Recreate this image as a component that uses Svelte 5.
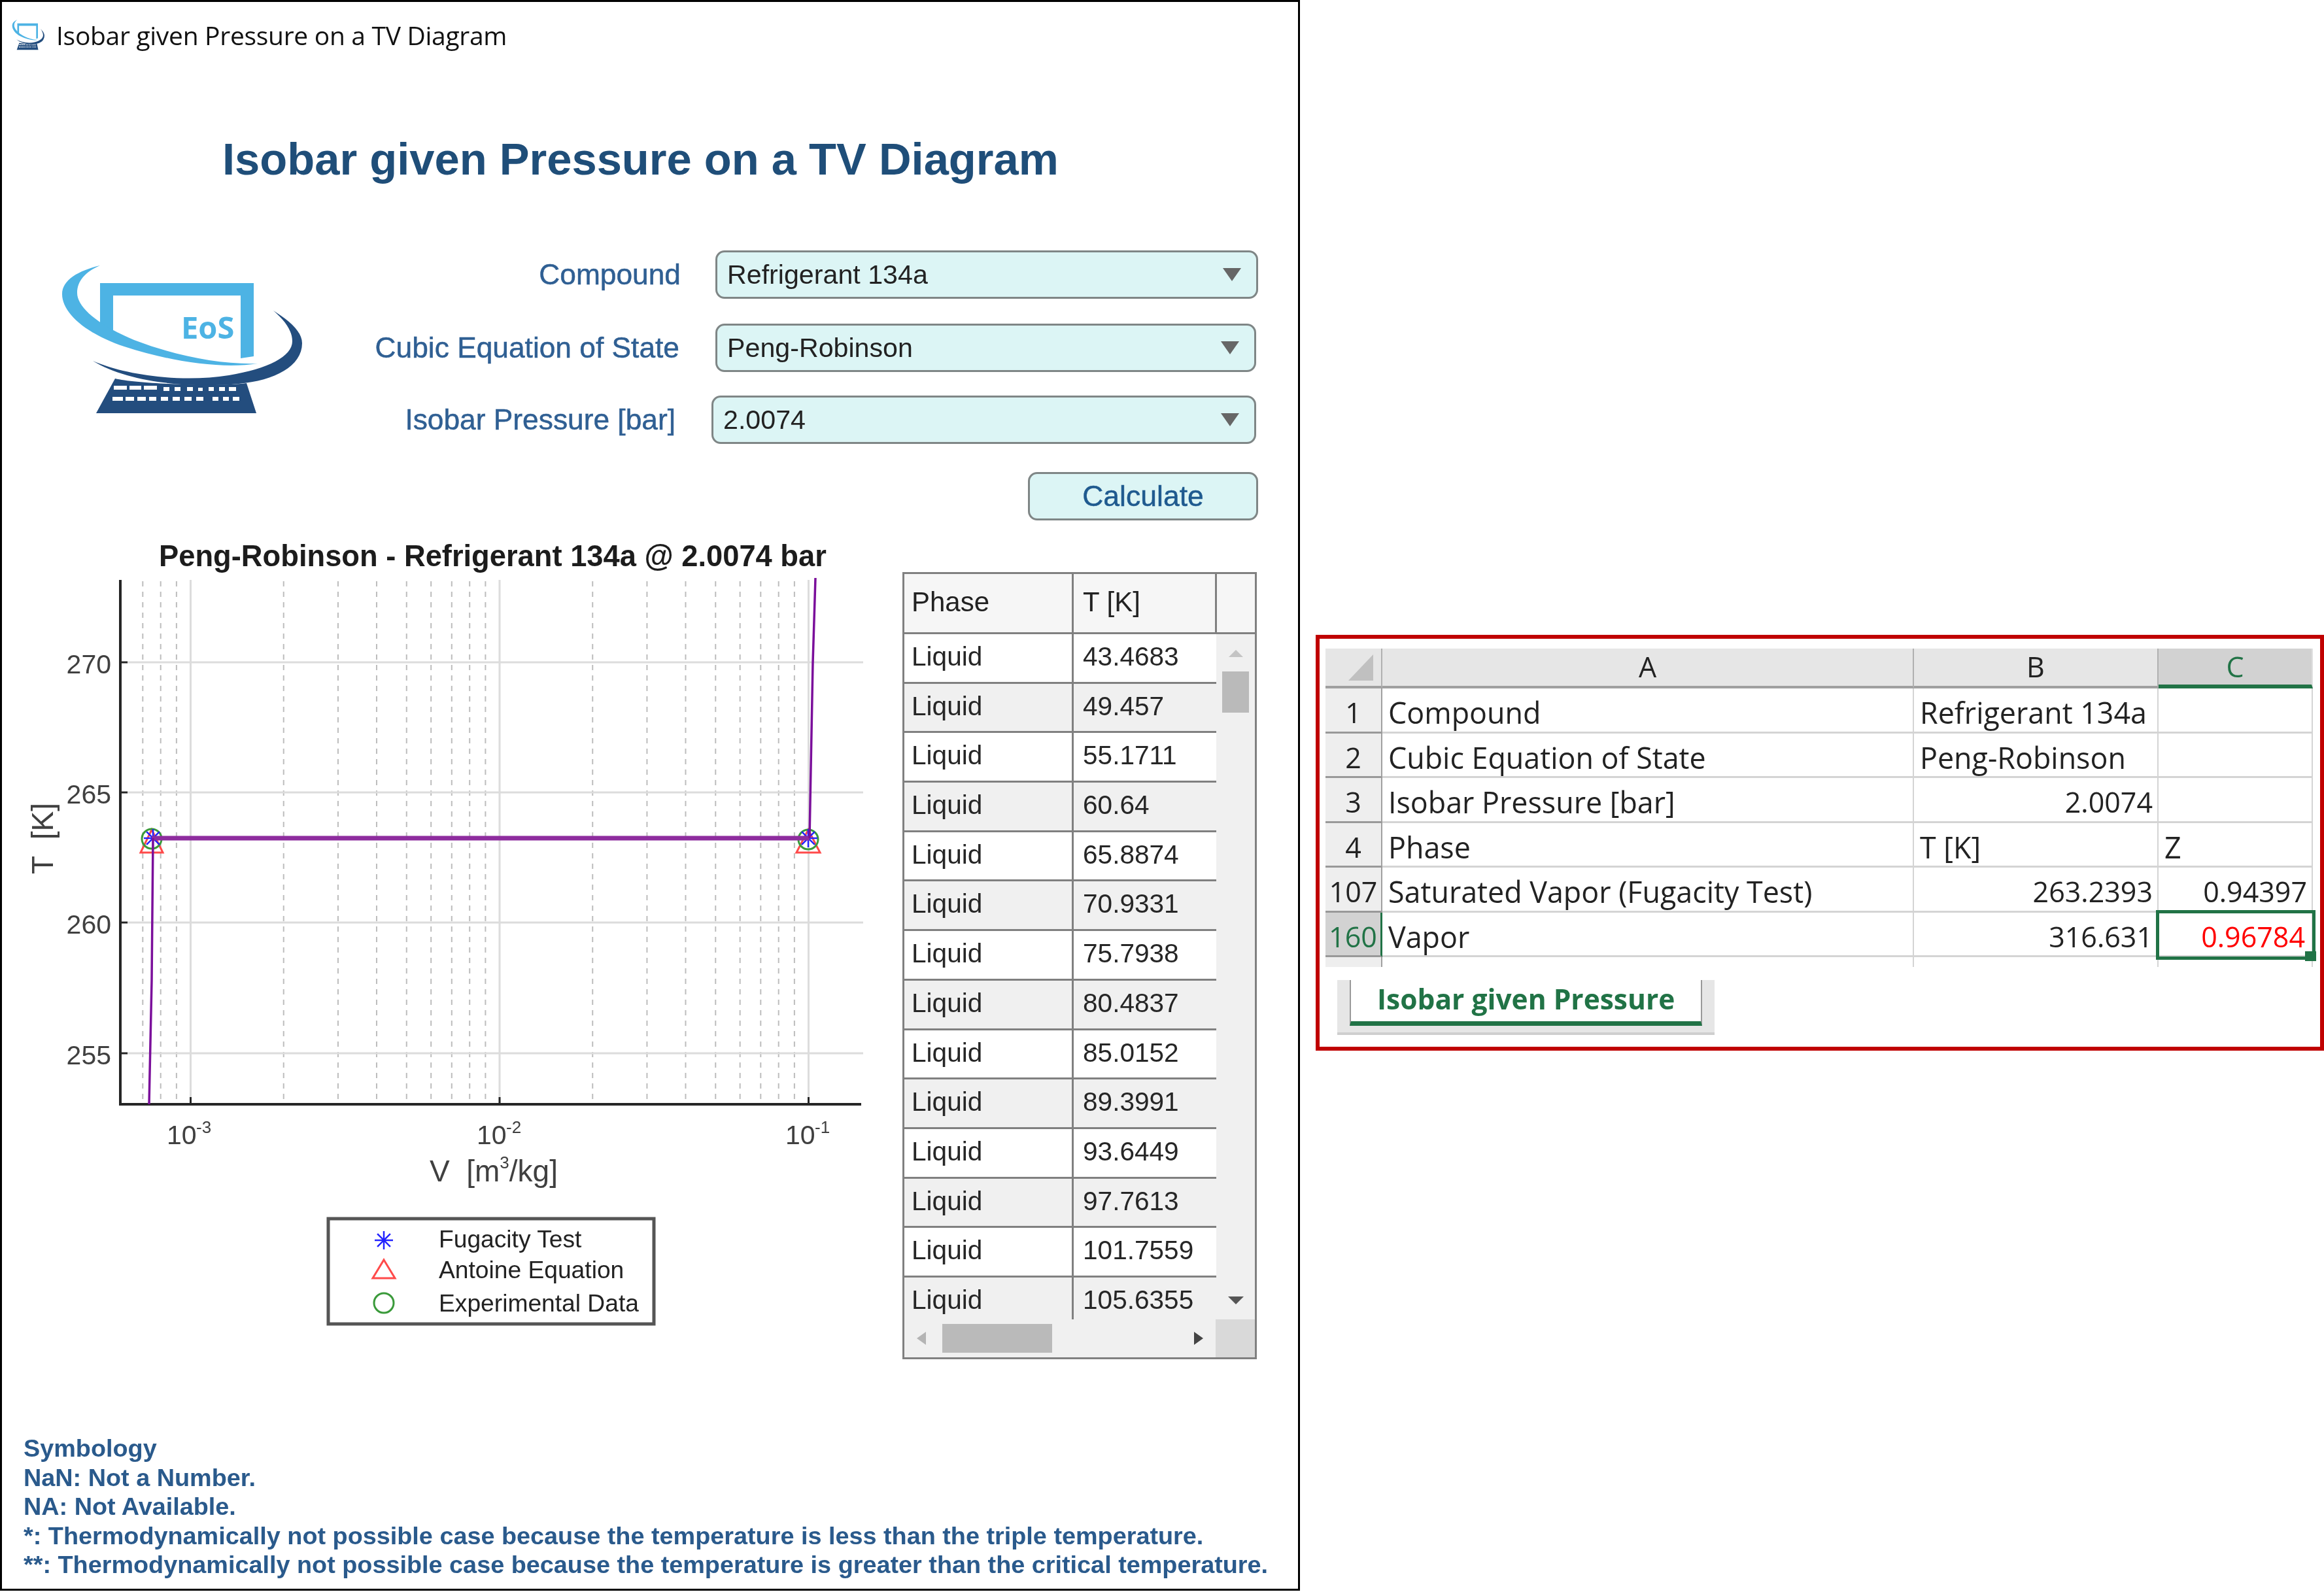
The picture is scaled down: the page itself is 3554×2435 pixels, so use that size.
<script>
  const temps = ['43.4683','49.457','55.1711','60.64','65.8874','70.9331','75.7938','80.4837','85.0152','89.3991','93.6449','97.7613','101.7559','105.6355'];
  const X0 = 291.5, DEC = 472.5;
  const minors = [];
  for (let d = -1; d <= 1; d++) {
    for (let k = 2; k <= 9; k++) {
      const x = X0 + (d + Math.log10(k)) * DEC;
      if (x > 195 && x < 1236) minors.push(x);
    }
  }
  const majorsX = [X0, X0 + DEC, X0 + 2 * DEC];
  const majorsY = [{ y: 1013, t: '270' }, { y: 1212, t: '265' }, { y: 1411, t: '260' }, { y: 1611, t: '255' }];
  const xTicks = [{ x: 255, e: '-3', m: X0 }, { x: 729, e: '-2', m: X0 + DEC }, { x: 1201, e: '-1', m: X0 + 2 * DEC }];
  const star = (cx, cy, r) => {
    const out = [];
    for (let i = 0; i < 4; i++) {
      const a = (i * Math.PI) / 4 + Math.PI / 2;
      out.push({ x1: cx + r * Math.cos(a), y1: cy + r * Math.sin(a), x2: cx - r * Math.cos(a), y2: cy - r * Math.sin(a) });
    }
    return out;
  };
  const excel = [
    { n: '1', a: 'Compound', b: 'Refrigerant 134a', c: '' },
    { n: '2', a: 'Cubic Equation of State', b: 'Peng-Robinson', c: '' },
    { n: '3', a: 'Isobar Pressure [bar]', b: '2.0074', bn: true, c: '' },
    { n: '4', a: 'Phase', b: 'T [K]', c: 'Z', cl: true },
    { n: '107', a: 'Saturated Vapor (Fugacity Test)', b: '263.2393', bn: true, c: '0.94397' },
    { n: '160', a: 'Vapor', b: '316.631', bn: true, c: '0.96784', sel: true }
  ];
</script>

{#snippet logo(cls)}
  <svg class={cls} viewBox="90 400 380 240" preserveAspectRatio="none">
    <path fill="#4db3e4" d="M153 433H388V545L368 548V452H173V512L153 498Z" />
    <path fill="#4db3e4" d="M153 406C120 414 95 428 95 450C95 478 130 510 190 530C260 553 340 565 394 556C340 558 270 545 205 520C150 497 118 470 118 448C118 430 130 416 153 406Z" />
    <path fill="#234d7e" d="M418 475C438 488 462 505 462 525C462 560 420 582 365 587C290 594 195 585 142 552C195 575 280 585 350 574C410 564 447 545 447 522C447 505 435 490 418 475Z" />
    <path fill="#234d7e" d="M176 579C210 587 330 592 377 586L392 632H147Z" />
    <g fill="#fff">
      <rect x="174" y="590" width="20" height="6" /><rect x="198" y="590" width="18" height="6" /><rect x="220" y="590" width="20" height="6" />
      <rect x="250" y="592" width="9" height="6" /><rect x="267" y="592" width="9" height="6" /><rect x="286" y="592" width="9" height="6" /><rect x="303" y="593" width="7" height="5" /><rect x="319" y="592" width="8" height="6" /><rect x="335" y="592" width="9" height="6" /><rect x="350" y="592" width="11" height="6" />
      <rect x="172" y="607" width="16" height="6" /><rect x="192" y="607" width="13" height="6" /><rect x="210" y="607" width="13" height="6" /><rect x="228" y="607" width="11" height="6" /><rect x="246" y="607" width="11" height="6" /><rect x="264" y="607" width="11" height="6" /><rect x="282" y="607" width="11" height="6" /><rect x="300" y="607" width="11" height="6" /><rect x="325" y="607" width="9" height="6" /><rect x="341" y="607" width="9" height="6" /><rect x="356" y="607" width="10" height="6" />
    </g>
    {#if cls === 'logo'}
      <text class="eos" x="277" y="518">EoS</text>
    {/if}
  </svg>
{/snippet}

<div class="page">
  <section class="app">
    <header class="titlebar">
      {@render logo('mini')}
      <span class="wintitle">Isobar given Pressure on a TV Diagram</span>
    </header>
    <h1>Isobar given Pressure on a TV Diagram</h1>

    <div class="form">
      {@render logo('logo')}
      <div class="fields">
        <div class="row r1">
          <span class="label">Compound</span>
          <div class="select"><span>Refrigerant 134a</span><i class="tri"></i></div>
        </div>
        <div class="row r2">
          <span class="label">Cubic Equation of State</span>
          <div class="select"><span>Peng-Robinson</span><i class="tri"></i></div>
        </div>
        <div class="row r3">
          <span class="label">Isobar Pressure [bar]</span>
          <div class="select"><span>2.0074</span><i class="tri"></i></div>
        </div>
        <button class="calc">Calculate</button>
      </div>
    </div>

    <div class="results">
      <svg class="chart" viewBox="3 820 1367 1260">
        <text class="ctitle" x="243" y="866">Peng-Robinson - Refrigerant 134a @ 2.0074 bar</text>
        {#each minors as x}
          <line class="minor" x1={x} x2={x} y1="889" y2="1688" />
        {/each}
        {#each majorsX as x}
          <line class="major" x1={x} x2={x} y1="887" y2="1688" />
        {/each}
        {#each majorsY as m}
          <line class="major" x1="194" x2="1320" y1={m.y} y2={m.y} />
          <line class="axis thin" x1="184" x2="195" y1={m.y} y2={m.y} />
          <text class="tick" x="170" y={m.y + 17} text-anchor="end">{m.t}</text>
        {/each}
        <line class="axis" x1="184" x2="184" y1="887" y2="1691" />
        <line class="axis" x1="182" x2="1317" y1="1689" y2="1689" />
        {#each xTicks as t}
          <line class="axis thin" x1={t.m} x2={t.m} y1="1689" y2="1678" />
          <text class="tick" x={t.x} y="1750">10</text>
          <text class="sup" x={t.x + 45} y="1733">{t.e}</text>
        {/each}
        <text class="axlabel" transform="translate(81 1337) rotate(-90)">T  [K]</text>
        <text class="axlabel" x="657" y="1807">V  [m<tspan class="sup3" dy="-20">3</tspan><tspan dy="20">/kg]</tspan></text>

        <path class="tri-m" d="M232 1269L249 1304H215Z" />
        <path class="tri-m" d="M1236 1269L1254 1304H1218Z" />
        <circle class="circ-m" cx="232" cy="1283" r="15" />
        <circle class="circ-m" cx="1236" cy="1284" r="15" />
        {#each [...star(234, 1282, 14), ...star(1236, 1282, 14)] as l}
          <line class="star-m" x1={l.x1} y1={l.y1} x2={l.x2} y2={l.y2} />
        {/each}
        <line class="iso" x1="232" x2="1238" y1="1282" y2="1282" />
        <path class="curve" d="M228 1689L232 1500L234 1282" />
        <path class="curve" d="M1238 1282L1243 1014L1247 884" />

        <rect class="legend" x="502" y="1864" width="498" height="161" />
        {#each star(587, 1897, 14) as l}
          <line class="star-m" x1={l.x1} y1={l.y1} x2={l.x2} y2={l.y2} />
        {/each}
        <path class="tri-m" d="M587 1927L604 1955H570Z" />
        <circle class="circ-m" cx="587" cy="1993" r="15" />
        <text class="legtxt" x="671" y="1908">Fugacity Test</text>
        <text class="legtxt" x="671" y="1955">Antoine Equation</text>
        <text class="legtxt" x="671" y="2006">Experimental Data</text>
      </svg>

      <div class="table">
        <div class="thead">
          <div class="th c1">Phase</div>
          <div class="th c2">T [K]</div>
          <div class="th c3"></div>
        </div>
        <div class="tbody">
          <div class="rows">
            {#each temps as t, i}
              <div class="tr" class:alt={i % 2 === 1}>
                <div class="td c1">Liquid</div>
                <div class="td c2">{t}</div>
              </div>
            {/each}
          </div>
          <div class="vbar">
            <i class="arr up"></i>
            <div class="vthumb"></div>
            <i class="arr down"></i>
          </div>
        </div>
        <div class="hbar">
          <i class="arr left"></i>
          <div class="hthumb"></div>
          <i class="arr right"></i>
          <div class="corner"></div>
        </div>
      </div>
    </div>

    <footer class="symbology">
      <p>Symbology</p>
      <p>NaN: Not a Number.</p>
      <p>NA: Not Available.</p>
      <p>*: Thermodynamically not possible case because the temperature is less than the triple temperature.</p>
      <p>**: Thermodynamically not possible case because the temperature is greater than the critical temperature.</p>
    </footer>
  </section>

  <section class="sheet">
    <div class="grid">
      <div class="hd corner-hd"><i class="corner-tri"></i></div>
      <div class="hd">A</div>
      <div class="hd">B</div>
      <div class="hd active">C</div>
      {#each excel as r}
        <div class="rowh" class:rsel={r.sel}>{r.n}</div>
        <div class="cell">{r.a}</div>
        <div class="cell" class:num={r.bn}>{r.b}</div>
        <div class="cell" class:num={!r.cl} class:picked={r.sel}>
          {r.c}
          {#if r.sel}<i class="handle"></i>{/if}
        </div>
      {/each}
      <div class="stub rowstub"></div>
      <div class="stub"></div>
      <div class="stub"></div>
      <div class="stub"></div>
    </div>
    <div class="tabstrip">
      <div class="tab">Isobar given Pressure</div>
    </div>
  </section>
</div>

<style>
  :global(body) { margin: 0; background: #fff; }
  .page {
    display: flex;
    align-items: flex-start;
    width: 3554px;
    height: 2435px;
    overflow: hidden;
    background: #fff;
    font-family: "Liberation Sans", Arial, sans-serif;
    filter: blur(0.6px);
  }
  .app {
    box-sizing: border-box;
    flex: none;
    width: 1988px;
    height: 2433px;
    border: 3px solid #000;
    display: flex;
    flex-direction: column;
  }
  .titlebar {
    display: flex;
    align-items: center;
    height: 100px;
    padding-left: 15px;
    gap: 17px;
  }
  .mini { width: 51px; height: 49px; flex: none; }
  .wintitle {
    font-family: "Open Sans", sans-serif;
    font-size: 39px;
    color: #111;
    letter-spacing: -0.3px;
  }
  h1 {
    margin: 0;
    height: 280px;
    line-height: 282px;
    padding-left: 337px;
    font-size: 68.7px;
    font-weight: 700;
    color: #1f4e79;
    white-space: nowrap;
  }
  .form {
    display: flex;
    justify-content: space-between;
    padding-right: 61px;
    height: 414px;
  }
  .logo { width: 380px; height: 240px; margin: 17px 0 0 87px; flex: none; }
  .eos { font-family: "Open Sans", sans-serif; font-weight: 700; font-size: 47px; fill: #4db3e4; }
  .fields { display: flex; flex-direction: column; align-items: flex-end; }
  .row { display: flex; align-items: center; }
  .r1 .label { margin-right: 53px; }
  .r1 .select { width: 830px; }
  .r2 { margin: 38px 3px 0 0; }
  .r2 .label { margin-right: 55px; }
  .r2 .select { width: 827px; }
  .r3 { margin: 36px 3px 0 0; }
  .r3 .label { margin-right: 55px; }
  .r3 .select { width: 833px; }
  .label { font-size: 44.3px; color: #2f5f93; white-space: nowrap; -webkit-text-stroke: 0.5px #2f5f93; }
  .select {
    box-sizing: border-box;
    height: 74px;
    display: flex;
    align-items: center;
    justify-content: space-between;
    padding: 0 23px 0 15px;
    border: 3px solid #7f8686;
    border-radius: 14px;
    background: #dcf5f5;
    font-size: 41.2px;
    color: #222;
  }
  .tri {
    width: 0;
    height: 0;
    border-left: 14px solid transparent;
    border-right: 14px solid transparent;
    border-top: 20px solid #666;
  }
  .calc {
    box-sizing: border-box;
    width: 352px;
    height: 74px;
    margin-top: 43px;
    border: 3px solid #7f8686;
    border-radius: 14px;
    background: #dcf5f5;
    font: 44.5px "Liberation Sans", Arial, sans-serif;
    color: #1f5a8f;
    -webkit-text-stroke: 0.5px #1f5a8f;
    padding: 0;
  }
  .results { display: flex; align-items: flex-start; margin-top: 23px; height: 1260px; }
  .chart { width: 1367px; height: 1260px; flex: none; }
  .ctitle { font-size: 45.3px; font-weight: 700; fill: #1c1c1c; }
  .minor { stroke: #bdbdbd; stroke-width: 2; stroke-dasharray: 8 8; }
  .major { stroke: #dcdcdc; stroke-width: 3; }
  .axis { stroke: #262626; stroke-width: 4; }
  .axis.thin { stroke-width: 3; }
  .tick { font-size: 41px; fill: #404040; }
  .sup { font-size: 26px; fill: #404040; }
  .sup3 { font-size: 26px; }
  .axlabel { font-size: 46px; fill: #404040; white-space: pre; }
  .iso { stroke: #8e2c9e; stroke-width: 7; }
  .curve { fill: none; stroke: #7b0f9b; stroke-width: 3.5; }
  .tri-m { fill: none; stroke: #ff4a4a; stroke-width: 3; }
  .circ-m { fill: none; stroke: #3a9a3a; stroke-width: 3; }
  .star-m { stroke: #2222ff; stroke-width: 2.5; }
  .legend { fill: #fff; stroke: #555; stroke-width: 5; }
  .legtxt { font-size: 37.2px; fill: #222; }

  .table {
    box-sizing: border-box;
    width: 542px;
    height: 1204px;
    margin: 55px 0 0 10px;
    border: 3px solid #808080;
    background: #f0f0f0;
    display: flex;
    flex-direction: column;
    flex: none;
  }
  .thead { display: flex; height: 92px; flex: none; border-bottom: 3px solid #808080; box-sizing: border-box; background: #f6f6f6; }
  .th { box-sizing: border-box; font-size: 42px; line-height: 86px; color: #222; padding-left: 11px; }
  .c1 { width: 259px; border-right: 3px solid #808080; box-sizing: border-box; padding-left: 11px; flex: none; }
  .c2 { width: 219px; flex: none; box-sizing: border-box; padding-left: 14px; }
  .th.c2 { border-right: 3px solid #808080; }
  .th.c3 { flex: 1; }
  .tbody { display: flex; height: 1048px; flex: none; overflow: hidden; }
  .rows { width: 477px; flex: none; }
  .tr { display: flex; height: 75.7px; box-sizing: border-box; border-bottom: 3px solid #808080; background: #fff; }
  .tr.alt { background: #f0f0f0; }
  .td { font-size: 40.6px; line-height: 68px; color: #262626; white-space: nowrap; }
  .vbar { flex: 1; display: flex; flex-direction: column; align-items: center; position: relative; }
  .arr { width: 0; height: 0; display: block; flex: none; }
  .arr.up { margin-top: 24px; border-left: 11px solid transparent; border-right: 11px solid transparent; border-bottom: 11px solid #c4c4c4; }
  .vthumb { width: 41px; height: 63px; margin-top: 22px; background: #bababa; flex: none; }
  .arr.down { margin-top: auto; margin-bottom: 23px; border-left: 12px solid transparent; border-right: 12px solid transparent; border-top: 12px solid #555; }
  .hbar { flex: 1; display: flex; align-items: center; }
  .arr.left { margin-left: 19px; border-top: 10px solid transparent; border-bottom: 10px solid transparent; border-right: 14px solid #b4b4b4; }
  .hthumb { width: 168px; height: 44px; margin-left: 25px; background: #bababa; }
  .arr.right { margin-left: 217px; border-top: 10px solid transparent; border-bottom: 10px solid transparent; border-left: 14px solid #444; }
  .corner { align-self: stretch; margin-left: auto; width: 60px; background: #d9d9d9; }

  .symbology {
    margin-top: 113px;
    padding-left: 33px;
    font-size: 37.8px;
    font-weight: 700;
    color: #2a5a8c;
    white-space: nowrap;
  }
  .symbology p { margin: 0; height: 44.6px; line-height: 44.6px; }

  .sheet {
    box-sizing: border-box;
    flex: none;
    width: 1542px;
    height: 636px;
    margin: 971px 0 0 24px;
    border: 6px solid #c00000;
    padding: 15px 0 0 9px;
    font-family: "Open Sans", sans-serif;
    font-size: 43px;
    color: #222;
  }
  .grid {
    display: grid;
    grid-template-columns: 87px 813px 374px 236px;
    grid-template-rows: 61px repeat(6, 68.5px) 15px;
  }
  .hd {
    box-sizing: border-box;
    background: #e6e6e6;
    border-right: 2px solid #b0b0b0;
    border-bottom: 4px solid #a0a0a0;
    text-align: center;
    line-height: 56px;
  }
  .corner-hd { position: relative; }
  .corner-tri {
    position: absolute;
    right: 12px;
    bottom: 8px;
    width: 0;
    height: 0;
    border-bottom: 40px solid #c0c0c0;
    border-left: 38px solid transparent;
  }
  .hd.active { background: #d2d2d2; color: #217346; border-bottom: 6px solid #217346; border-right: 2px solid #e0e0e0; }
  .rowh {
    box-sizing: border-box;
    background: #eeeeee;
    border-right: 2px solid #a0a0a0;
    border-bottom: 3px solid #999;
    text-align: center;
    padding-top: 6px;
    line-height: 62px;
  }
  .rowh.rsel { background: #d2d2d2; color: #217346; border-right: 3px solid #217346; }
  .cell {
    box-sizing: border-box;
    position: relative;
    border-right: 2px solid #d4d4d4;
    border-bottom: 3px solid #d4d4d4;
    padding: 6px 4px 0 9px;
    line-height: 62px;
    font-size: 44.8px;
    white-space: nowrap;
  }
  .cell.num { text-align: right; font-size: 43px; padding-right: 7px; }
  .cell.picked { color: #ff0000; outline: 5px solid #217346; outline-offset: -1px; padding-right: 10px; }
  .handle { position: absolute; right: -7px; bottom: -9px; width: 17px; height: 15px; background: #217346; }
  .stub { border-right: 2px solid #d4d4d4; }
  .rowstub { background: #eeeeee; border-right: 2px solid #a0a0a0; }
  .tabstrip {
    box-sizing: border-box;
    width: 577px;
    height: 84px;
    margin: 20px 0 0 18px;
    padding: 0 19px;
    background: #e6e6e6;
    border-bottom: 4px solid #cfcfcf;
  }
  .tab {
    box-sizing: border-box;
    height: 70px;
    background: #fff;
    border-bottom: 7px solid #217346;
    border-left: 2px solid #999;
    border-right: 2px solid #999;
    padding-left: 40px;
    font-weight: 700;
    font-size: 42.5px;
    line-height: 58px;
    color: #217346;
  }
</style>
